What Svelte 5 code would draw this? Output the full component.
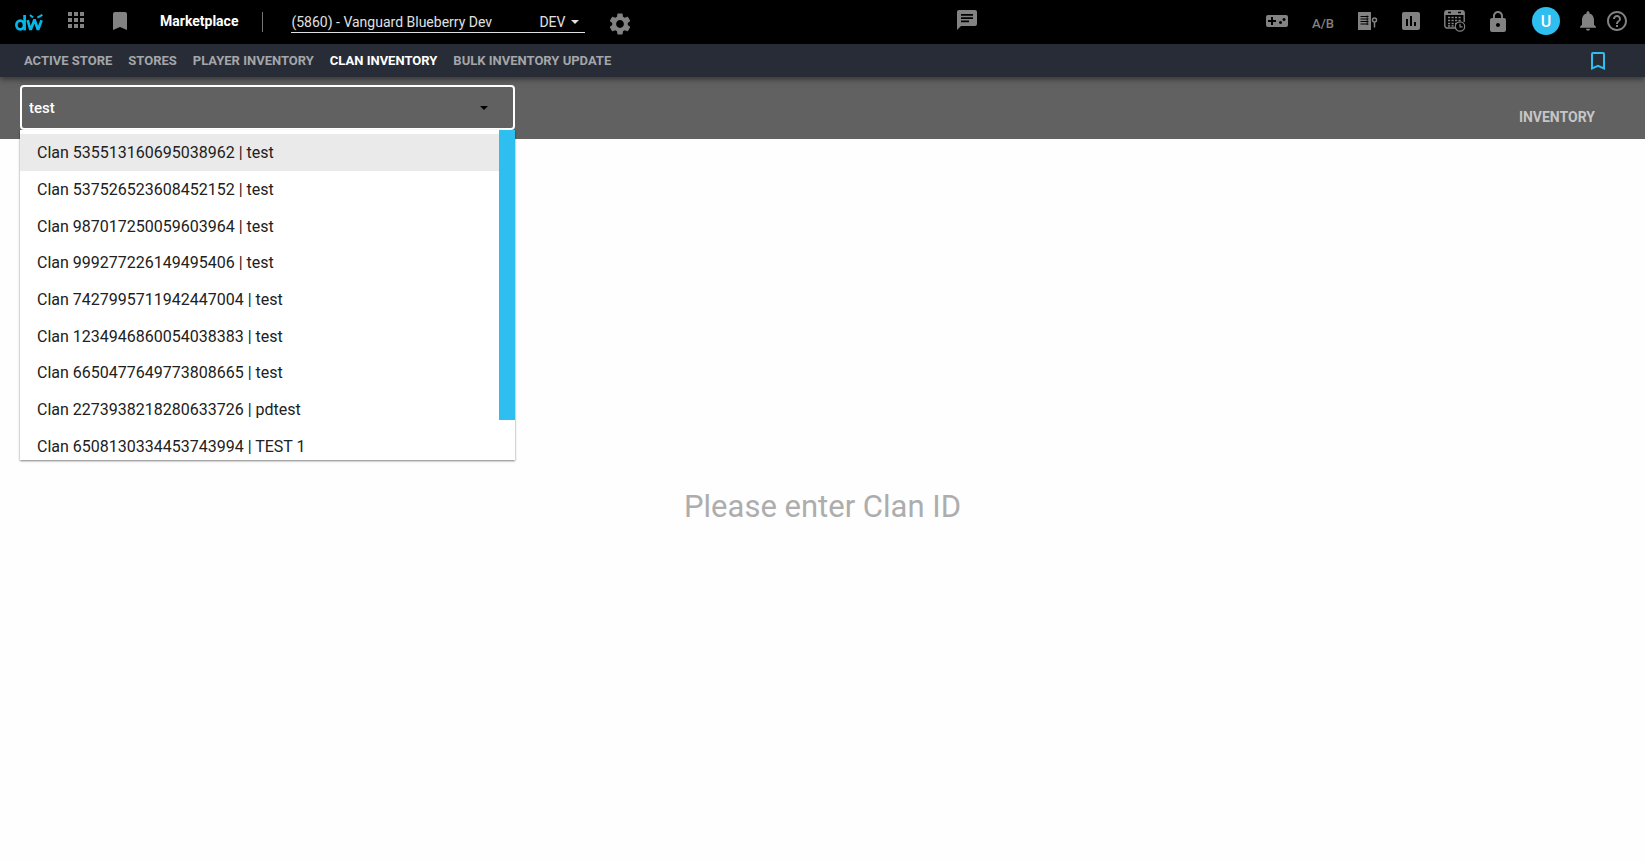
<script>
  const tabs = ['Active Store', 'Stores', 'Player Inventory', 'Clan Inventory', 'Bulk Inventory Update'];
  const activeTab = 'Clan Inventory';
  const clans = [
    ['535513160695038962', 'test'],
    ['537526523608452152', 'test'],
    ['987017250059603964', 'test'],
    ['999277226149495406', 'test'],
    ['7427995711942447004', 'test'],
    ['1234946860054038383', 'test'],
    ['6650477649773808665', 'test'],
    ['2273938218280633726', 'pdtest'],
    ['6508130334453743994', 'TEST 1']
  ];
  let query = $state('test');
</script>

<div class="page">
  <header class="topbar">
    <div class="group left">
      <a class="logo" href="#home" aria-label="Home">
        <svg width="28" height="17" viewBox="0 0 28 17" fill="none" stroke="#00b9ea" stroke-width="2.7">
          <ellipse cx="5.2" cy="11" rx="3.8" ry="4.3" />
          <path d="M9.6 1v15.4" />
          <path d="M12.6 6.2l2.6 8.6h.8l3.2-8.4h.6l2.8 8.4h.8l3.2-8.600" />
          <path d="M15 1l3 2.600M27.400.8l-5 2.800" stroke-width="2" />
        </svg>
      </a>
      <button class="icon apps" aria-label="Apps">
        <svg width="16" height="16" viewBox="0 0 16 16"><path d="M0 0h4v4H0zM6 0h4v4H6zM12 0h4v4h-4zM0 6h4v4H0zM6 6h4v4H6zM12 6h4v4h-4zM0 12h4v4H0zM6 12h4v4H6zM12 12h4v4h-4z" /></svg>
      </button>
      <button class="icon saved" aria-label="Bookmarks">
        <svg width="14" height="18" viewBox="5 3 14 18"><path d="M17 3H7c-1.100 0-2 .9-2 2v16l7-3 7 3V5c0-1.100-.9-2-2-2z" /></svg>
      </button>
      <span class="product">Marketplace</span>
      <span class="divider"></span>
      <button class="title-picker">
        <span class="title-name">(5860) - Vanguard Blueberry Dev</span>
        <span>DEV</span>
        <svg width="8" height="4" viewBox="0 0 8 4"><path d="M0 0h8L4 4z" /></svg>
      </button>
      <button class="icon gear" aria-label="Settings">
        <svg width="26" height="26" viewBox="0 0 24 24"><path d="M19.140 12.940c.04-.3.060-.61.060-.94 0-.32-.02-.64-.07-.94l2.030-1.580c.18-.14.230-.41.120-.61l-1.920-3.320c-.12-.22-.37-.29-.59-.22l-2.390.96c-.5-.38-1.030-.7-1.620-.94l-.36-2.540c-.04-.24-.24-.41-.48-.41h-3.840c-.24 0-.43.170-.47.410l-.36 2.540c-.59.240-1.130.570-1.620.94l-2.390-.96c-.22-.08-.47 0-.59.220L2.740 8.870c-.12.210-.08.470.120.610l2.030 1.580c-.05.3-.09.630-.09.940s.02.640.070.94l-2.030 1.580c-.18.140-.23.410-.12.610l1.920 3.320c.12.220.37.290.59.220l2.390-.96c.5.380 1.030.7 1.620.94l.36 2.540c.05.240.24.410.48.410h3.840c.24 0 .44-.17.470-.41l.36-2.540c.59-.24 1.130-.56 1.620-.94l2.390.96c.22.080.47 0 .59-.22l1.920-3.320c.12-.22.070-.47-.12-.61l-2.010-1.580zM12 15.600c-1.980 0-3.600-1.620-3.600-3.600s1.620-3.600 3.600-3.600 3.600 1.620 3.600 3.600-1.620 3.600-3.600 3.600z" /></svg>
      </button>
    </div>

    <button class="icon chat" aria-label="Messages">
      <svg width="20" height="20" viewBox="2 2 20 20"><path d="M4 2h16a2 2 0 0 1 2 2v12a2 2 0 0 1-2 2H6l-4 4V4c0-1.100.9-2 2-2zm2 4v1.700h12V6zm0 3.300V11h12V9.300zm0 3.200v1.700h8v-1.700z" /></svg>
    </button>

    <div class="group right">
      <button class="icon" aria-label="Games">
        <svg width="22" height="12" viewBox="0 0 22 12"><path fill-rule="evenodd" d="M2 0h18a2 2 0 0 1 2 2v8a2 2 0 0 1-2 2H2a2 2 0 0 1-2-2V2a2 2 0 0 1 2-2zm3 2v3H2v2h3v3h2V7h3V5H7V2zm13 1.100a1.500 1.500 0 1 0 .01 0zM14.500 6a1.500 1.500 0 1 0 .01 0z" /></svg>
      </button>
      <button class="icon ab">A/B</button>
      <button class="icon" aria-label="Permissions">
        <svg width="20" height="18" viewBox="0 0 20 18"><path d="M0 0h13v18H0z" /><path d="M2.500 4.500h8M2.500 7h8M2.500 9.500h8M2.500 12h8" stroke="#000" stroke-width="1.200" /><path d="M9.200 3.500v9.500" stroke="#000" stroke-width=".8" /><circle cx="16.500" cy="8" r="2" fill="none" stroke="currentColor" stroke-width="1.500" /><path d="M16.500 10v5.500" stroke="currentColor" stroke-width="1.500" /></svg>
      </button>
      <button class="icon" aria-label="Reports">
        <svg width="18" height="18" viewBox="3 3 18 18"><path d="M19 3H5c-1.100 0-2 .9-2 2v14c0 1.100.9 2 2 2h14c1.100 0 2-.9 2-2V5c0-1.100-.9-2-2-2zM9 17H7v-7h2v7zm4 0h-2V7h2v10zm4 0h-2v-4h2v4z" /></svg>
      </button>
      <button class="icon" aria-label="Schedule">
        <svg width="22" height="22" viewBox="0 0 22 22" fill="none" stroke="currentColor"><path d="M12 18H3a2.200 2.200 0 0 1-2.200-2.200V3A2.200 2.200 0 0 1 3 .8h15A2.200 2.200 0 0 1 20.200 3v9" stroke-width="1.400" /><path d="M1 3h19" stroke-width="4" /><path d="M4 2.500h3M14 2.500h3" stroke="#000" stroke-width="1.500" /><path d="M4 7.500h14M4 10.500h14M4 13.500h9M4 16h7" stroke-width="1.700" stroke-dasharray="2.200 1.300" /><circle cx="16" cy="16.500" r="4.700" fill="#000" stroke-width="1.200" /><path d="M16 13.800v3h2.500" stroke-width="1.200" /></svg>
      </button>
      <button class="icon" aria-label="Security">
        <svg width="16" height="21" viewBox="4 1 16 21"><path d="M18 8h-1V6c0-2.760-2.240-5-5-5S7 3.240 7 6v2H6c-1.100 0-2 .9-2 2v10c0 1.100.9 2 2 2h12c1.100 0 2-.9 2-2V10c0-1.100-.9-2-2-2zm-6 9c-1.100 0-2-.9-2-2s.9-2 2-2 2 .9 2 2-.9 2-2 2zm3.100-9H8.900V6c0-1.710 1.390-3.100 3.100-3.100s3.100 1.390 3.100 3.100v2z" /></svg>
      </button>
      <div class="account">
        <button class="avatar">U</button>
        <div class="alerts">
          <button class="icon" aria-label="Notifications">
            <svg width="16" height="20" viewBox="4 2.500 16 19.500"><path d="M12 22c1.100 0 2-.9 2-2h-4c0 1.100.89 2 2 2zm6-6v-5c0-3.070-1.640-5.640-4.500-6.320V4c0-.83-.67-1.500-1.500-1.500s-1.500.67-1.500 1.500v.68C7.630 5.360 6 7.920 6 11v5l-2 2v1h16v-1l-2-2z" /></svg>
          </button>
          <button class="icon" aria-label="Help">
            <svg width="20" height="20" viewBox="2 2 20 20"><path d="M11 18h2v-2h-2v2zm1-16C6.480 2 2 6.480 2 12s4.480 10 10 10 10-4.480 10-10S17.520 2 12 2zm0 18c-4.410 0-8-3.590-8-8s3.590-8 8-8 8 3.590 8 8-3.590 8-8 8zm0-14c-2.210 0-4 1.790-4 4h2c0-1.100.9-2 2-2s2 .9 2 2c0 2-3 1.750-3 5h2c0-2.250 3-2.500 3-5 0-2.210-1.790-4-4-4z" /></svg>
          </button>
        </div>
      </div>
    </div>
  </header>

  <nav class="subnav">
    {#each tabs as tab}
      <a href="#tab" class:active={tab === activeTab}>{tab}</a>
    {/each}
    <button class="pin" aria-label="Bookmark this page">
      <svg width="14" height="18" viewBox="0 0 14 18" fill="none" stroke="currentColor" stroke-width="2"><path d="M2 1h10a1 1 0 0 1 1 1v14.400l-6-2.600-6 2.600V2a1 1 0 0 1 1-1z" /></svg>
    </button>
  </nav>

  <section class="filter">
    <div class="combo">
      <div class="field">
        <input type="text" aria-label="Clan ID" bind:value={query} />
        <svg width="8" height="4" viewBox="0 0 8 4"><path d="M0 0h8L4 4z" /></svg>
      </div>
      <div class="menu">
        <ul>
          {#each clans as [id, name], i}
            <li class:current={i === 0}>Clan {id} | {name}</li>
          {/each}
        </ul>
        <div class="track"><div class="thumb"></div></div>
      </div>
    </div>
    <a class="section-link" href="#inventory">Inventory</a>
  </section>

  <main>
    <p>Please enter Clan ID</p>
  </main>
</div>

<style>
  :global(body) {
    background: #fefefe;
  }
  .page {
    display: flex;
    flex-direction: column;
    min-height: 100vh;
    font-family: Roboto, "Liberation Sans", sans-serif;
    font-size: 16px;
    color: #212121;
  }
  button {
    padding: 0;
    border: 0;
    background: none;
    font: inherit;
    color: inherit;
    cursor: pointer;
  }
  a {
    color: inherit;
    text-decoration: none;
  }
  svg {
    display: block;
    fill: currentColor;
  }
  svg[fill="none"] {
    fill: none;
  }
  .topbar {
    display: flex;
    align-items: center;
    justify-content: space-between;
    height: 44px;
    padding: 0 18px 0 15px;
    background: #000;
    color: #fff;
  }
  .group {
    display: flex;
    align-items: center;
  }
  .left {
    margin-right: 34px;
  }
  .icon {
    color: #828282;
  }
  .apps {
    margin: 0 29px 0 25px;
    padding-bottom: 4px;
  }
  .saved {
    padding-bottom: 2px;
  }
  .product {
    margin-left: 33px;
    font-size: 14px;
    font-weight: 700;
    line-height: 20px;
    padding-bottom: 2px;
  }
  .divider {
    width: 1px;
    height: 20px;
    margin: 0 28px 0 24px;
    background: #757575;
  }
  .title-picker {
    display: flex;
    align-items: center;
    gap: 6px;
    width: 294px;
    height: 22px;
    padding-right: 6px;
    box-sizing: border-box;
    border-bottom: 1px solid #e0e0e0;
    font-size: 14px;
    color: #e0e0e0;
  }
  .title-name {
    flex: 1;
    text-align: left;
  }
  .gear {
    margin-left: 22px;
    padding-top: 4px;
  }
  .chat {
    margin-bottom: 4px;
  }
  .right {
    gap: 24px;
    padding-bottom: 2px;
  }
  .account {
    display: flex;
    align-items: center;
    gap: 20px;
    margin-left: 2px;
  }
  .alerts {
    display: flex;
    align-items: center;
    gap: 11px;
  }
  .ab {
    padding-top: 4px;
    font-size: 13px;
    font-weight: 500;
  }
  .avatar {
    width: 28px;
    height: 28px;
    border-radius: 50%;
    background: #2ebeef;
    font-weight: 500;
  }
  .subnav {
    position: relative;
    display: flex;
    align-items: center;
    gap: 16px;
    height: 33px;
    padding: 0 40px 0 24px;
    background: #282c36;
    box-shadow: 0 2px 6px rgba(0, 0, 0, 0.5);
    font-size: 13px;
    font-weight: 700;
    text-transform: uppercase;
    color: #a4a6a9;
  }
  .subnav .active {
    color: #fff;
  }
  .pin {
    margin-left: auto;
    color: #2ebeef;
  }
  .filter {
    display: flex;
    justify-content: space-between;
    align-items: flex-start;
    padding: 8px 50px 9px 20px;
    background: #616161;
  }
  .combo {
    position: relative;
    flex: 0 1 495px;
  }
  .field {
    display: flex;
    align-items: center;
    height: 45px;
    padding: 0 25px 0 7px;
    box-sizing: border-box;
    border: 2px solid #fff;
    border-radius: 4px;
    color: #000;
  }
  input {
    flex: 1;
    min-width: 0;
    padding: 0;
    border: 0;
    outline: 0;
    background: none;
    font: inherit;
    font-size: 15px;
    font-weight: 500;
    color: #fff;
  }
  .menu {
    position: absolute;
    z-index: 1;
    top: 100%;
    left: 0;
    display: flex;
    width: 100%;
    height: 330px;
    overflow: hidden;
    background: #fff;
    box-shadow: 0 1px 2px rgba(0, 0, 0, 0.5);
  }
  ul {
    display: grid;
    grid-auto-rows: 1fr;
    flex: 1;
    height: 330px;
    margin: 0;
    padding: 4px 0;
    list-style: none;
  }
  li {
    display: flex;
    align-items: center;
    padding: 1px 0 0 17px;
  }
  .current {
    background: #eaeaea;
  }
  .track {
    width: 16px;
  }
  .thumb {
    height: 88%;
    background: #2ebeef;
  }
  .section-link {
    margin-top: 23px;
    font-size: 14px;
    font-weight: 700;
    line-height: 18px;
    text-transform: uppercase;
    color: #c6c6c6;
  }
  main {
    display: flex;
    flex: 1;
    align-items: center;
    justify-content: center;
    padding-top: 12px;
  }
  p {
    margin: 0;
    font-size: 31px;
    color: #adadad;
  }
</style>
